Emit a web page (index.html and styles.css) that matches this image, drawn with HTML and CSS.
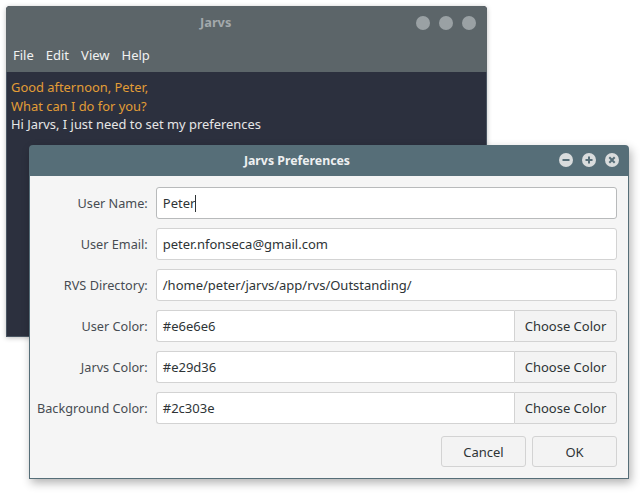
FILE: index.html
```html
<!DOCTYPE html>
<html>
<head>
<meta charset="utf-8">
<link rel="stylesheet" href="styles.css">
</head>
<body>
<div class="desktop">
  <div class="main-window">
    <div class="main-head">
      <div class="main-title">
        <span class="main-title-text">Jarvs</span>
        <div class="dots"><span></span><span></span><span></span></div>
      </div>
      <nav class="menubar">
        <span>File</span><span>Edit</span><span>View</span><span>Help</span>
      </nav>
    </div>
    <div class="chat">
      <p class="jarvs">Good afternoon, Peter,</p>
      <p class="jarvs">What can I do for you?</p>
      <p class="user">Hi Jarvs, I just need to set my preferences</p>
    </div>
  </div>

  <div class="dialog">
    <div class="dialog-head">
      <span class="dialog-title">Jarvs Preferences</span>
      <div class="dialog-ctrls">
        <svg viewBox="0 0 14 14" width="14" height="14"><circle cx="7" cy="7" r="7" fill="#d9dcdd"/><rect x="3.5" y="6" width="7" height="2" fill="#566e78"/></svg>
        <svg viewBox="0 0 14 14" width="14" height="14"><circle cx="7" cy="7" r="7" fill="#d9dcdd"/><rect x="3.5" y="6" width="7" height="2" fill="#566e78"/><rect x="6" y="3.5" width="2" height="7" fill="#566e78"/></svg>
        <svg viewBox="0 0 14 14" width="14" height="14"><circle cx="7" cy="7" r="7" fill="#d9dcdd"/><path d="M4.3 4.3 L9.7 9.7 M9.7 4.3 L4.3 9.7" stroke="#566e78" stroke-width="2"/></svg>
      </div>
    </div>
    <div class="dialog-body">
      <div class="form">
        <label>User Name:</label>
        <div class="entry focus">Peter<span class="caret"></span></div>
        <label>User Email:</label>
        <div class="entry">peter.nfonseca@gmail.com</div>
        <label>RVS Directory:</label>
        <div class="entry">/home/peter/jarvs/app/rvs/Outstanding/</div>
        <label>User Color:</label>
        <div class="combo"><div class="entry">#e6e6e6</div><button class="btn attached">Choose Color</button></div>
        <label>Jarvs Color:</label>
        <div class="combo"><div class="entry">#e29d36</div><button class="btn attached">Choose Color</button></div>
        <label>Background Color:</label>
        <div class="combo"><div class="entry">#2c303e</div><button class="btn attached">Choose Color</button></div>
      </div>
      <div class="actions">
        <button class="btn action">Cancel</button>
        <button class="btn action">OK</button>
      </div>
    </div>
  </div>
</div>
</body>
</html>
```
FILE: styles.css
```css
html, body {
  margin: 0;
  padding: 0;
  background: #ffffff;
}
body {
  font-family: "Noto Sans", "Open Sans", sans-serif;
  font-size: 13px;
  width: 640px;
  height: 494px;
  overflow: hidden;
}
.desktop {
  position: relative;
  width: 640px;
  height: 494px;
}
.main-window {
  position: absolute;
  left: 6px;
  top: 6px;
  width: 481px;
  height: 331px;
  border-radius: 4px 4px 0 0;
  overflow: hidden;
  display: flex;
  flex-direction: column;
  box-shadow: 0 1px 5px rgba(0,0,0,0.25);
  background: #2c303e;
}
.main-head {
  background: #5c6569;
  height: 66px;
  display: flex;
  flex-direction: column;
}
.main-title {
  height: 32px;
  display: flex;
  align-items: center;
  position: relative;
}
.main-title-text {
  position: absolute;
  left: 194px;
  top: 7px;
  color: #a3a9ac;
  font-weight: bold;
  font-size: 12.8px;
}
.dots {
  margin-left: auto;
  margin-right: 11px;
  display: flex;
  gap: 9px;
  margin-top: 1px;
}
.dots span {
  width: 14px;
  height: 14px;
  border-radius: 50%;
  background: #9aa1a4;
}
.menubar {
  display: flex;
  padding-left: 1px;
  height: 34px;
  align-items: center;
  color: #f0f1f1;
}
.menubar span {
  padding: 0 6px;
  line-height: 18px;
  margin-top: -1px;
}
.menubar span + span {
  margin-left: 0;
}
.chat {
  flex: 1;
  padding: 6px 4px;
  border: 1px solid #4a5562;
  border-top: none;
}
.chat p {
  margin: 0;
  line-height: 18.5px;
  font-size: 12.9px;
}
.jarvs { color: #e29d36; }
.user { color: #e6e6e6; }

.dialog {
  position: absolute;
  left: 29px;
  top: 145px;
  width: 600px;
  height: 334px;
  border-radius: 4px 4px 0 0;
  box-shadow: 2px 4px 10px rgba(0,0,0,0.3);
  display: flex;
  flex-direction: column;
}
.dialog-head {
  height: 31px;
  background: #566e78;
  border-radius: 4px 4px 0 0;
  display: flex;
  align-items: center;
  position: relative;
}
.dialog-title {
  flex: 1;
  text-align: center;
  color: #eef0f1;
  font-weight: bold;
  font-size: 12.3px;
  padding-right: 64px;
}
.dialog-ctrls {
  position: absolute;
  right: 10px;
  top: 8px;
  display: flex;
  gap: 9px;
}
.dialog-ctrls svg { display: block; }
.dialog-body {
  flex: 1;
  background: #f5f5f5;
  border: 1px solid #566e78;
  border-top: none;
  padding: 11px 11px 0 7px;
}
.form {
  display: grid;
  grid-template-columns: auto 1fr;
  column-gap: 8px;
  row-gap: 9px;
}
.form label {
  text-align: right;
  color: #474c52;
  line-height: 32px;
  font-size: 12.7px;
}
.entry {
  height: 32px;
  box-sizing: border-box;
  background: #ffffff;
  border: 1px solid #d3d3d3;
  border-radius: 3px;
  padding: 0 6px;
  line-height: 30px;
  color: #2e3436;
  display: flex;
  align-items: center;
}
.entry.focus {
  border-color: #b8babb;
}
.caret {
  display: inline-block;
  width: 1px;
  height: 17px;
  background: #2e3436;
}
.combo {
  display: flex;
}
.combo .entry {
  flex: 1;
  border-radius: 3px 0 0 3px;
  border-right: none;
}
.btn {
  font-family: inherit;
  font-size: 13px;
  color: #2e3436;
  background: #f3f3f3;
  border: 1px solid #d3d3d3;
  border-radius: 3px;
  padding: 0;
  margin: 0;
}
.btn.attached {
  width: 103px;
  height: 32px;
  border-radius: 0 3px 3px 0;
}
.actions {
  display: flex;
  justify-content: flex-end;
  gap: 6px;
  margin-top: 12px;
}
.btn.action {
  width: 85px;
  height: 31px;
}
```
